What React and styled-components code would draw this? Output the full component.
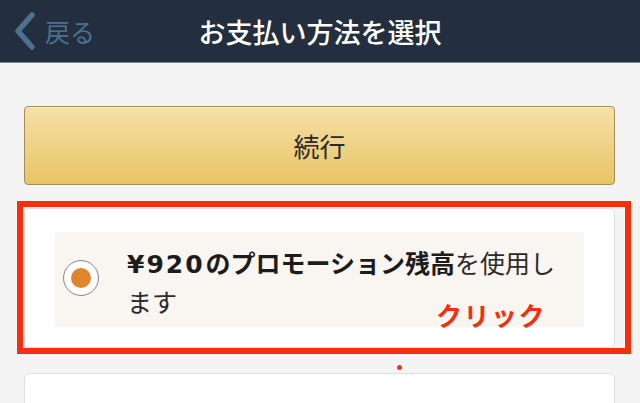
import styled, { createGlobalStyle } from "styled-components";

const GlobalStyle = createGlobalStyle`
  html, body {
    margin: 0;
    padding: 0;
    background: #f4f4f5;
    font-family: "Noto Sans CJK JP", "Noto Sans", sans-serif;
  }
`;

const StyledPage = styled.div`
  position: relative;
  width: 640px;
  height: 403px;
  overflow: hidden;
  background: #f4f4f5;
`;

const StyledHeader = styled.header`
  height: 62px;
  display: grid;
  grid-template-columns: 1fr auto 1fr;
  align-items: center;
  background: #232f3e;
  border-bottom: 1px solid #7d848c;
`;

const StyledBack = styled.div`
  display: flex;
  align-items: center;
  gap: 9px;
  padding-left: 12px;
  color: #4c7190;
  font-size: 25px;
`;

const StyledTitle = styled.h1`
  margin: 0;
  color: #ffffff;
  font-size: 27px;
  font-weight: 500;
`;

const StyledContent = styled.main`
  display: flex;
  flex-direction: column;
  padding: 43px 25px 0 24px;
`;

const StyledButton = styled.button`
  height: 79px;
  border: 1px solid #a68d58;
  border-radius: 4px;
  background: linear-gradient(#f6e0a7, #e8c465);
  box-shadow: inset 0 1px 0 rgba(255, 255, 255, 0.4);
  color: #2a2a2a;
  font-family: inherit;
  font-size: 26px;
  cursor: pointer;
`;

const StyledCard = styled.div`
  margin-top: ${(p) => p.$gap}px;
  height: ${(p) => p.$height}px;
  box-sizing: border-box;
  padding: 23px 30px 21px 30px;
  background: #ffffff;
  border: 1px solid #dedfe1;
  border-radius: 6px;
`;

const StyledOption = styled.label`
  height: 95px;
  display: flex;
  align-items: center;
  gap: 28px;
  padding: 0 10px 0 8px;
  background: #f9f5f0;
  cursor: pointer;
`;

const StyledRadio = styled.span`
  flex: none;
  width: 34px;
  height: 34px;
  margin-top: -3px;
  display: grid;
  place-items: center;
  border: 1.5px solid #8a8a8a;
  border-radius: 50%;
  background: #fff;
  box-shadow: inset 0 0 2px rgba(0, 0, 0, 0.15);

  &::after {
    content: "";
    width: 20px;
    height: 20px;
    border-radius: 50%;
    background: #df862d;
  }
`;

const StyledLabel = styled.span`
  max-width: 440px;
  margin-top: 4px;
  color: #2b2b2b;
  font-size: 25px;
  line-height: 37px;

  b {
    font-weight: 700;
    color: #1c1c1c;
  }
`;

const StyledAmount = styled.span`
  font-family: "DejaVu Sans", "Noto Sans", sans-serif;
  font-size: 25px;
  letter-spacing: 2px;
  margin-right: 1px;
`;

const StyledHighlight = styled.div`
  position: absolute;
  left: 17px;
  top: 201px;
  width: 614px;
  height: 153px;
  box-sizing: border-box;
  border: 6px solid #f52e0c;
  pointer-events: none;
`;

const StyledNote = styled.span`
  position: absolute;
  left: 436px;
  top: 296px;
  color: #f52e0c;
  font-size: 26px;
  font-weight: 700;
  letter-spacing: 1.5px;
`;

const StyledDot = styled.span`
  position: absolute;
  left: 397px;
  top: 365px;
  width: 5px;
  height: 5px;
  border-radius: 50%;
  background: #e8371f;
`;

const App = () => {
  return (
    <StyledPage>
      <GlobalStyle />
      <StyledHeader>
        <StyledBack>
          <svg width="24" height="38" viewBox="0 0 24 38">
            <path
              d="M20 3 L6 19 L20 35"
              fill="none"
              stroke="#4c7190"
              strokeWidth="5.5"
              strokeLinecap="round"
              strokeLinejoin="round"
            />
          </svg>
          戻る
        </StyledBack>
        <StyledTitle>お支払い方法を選択</StyledTitle>
        <div />
      </StyledHeader>

      <StyledContent>
        <StyledButton>続行</StyledButton>

        <StyledCard $gap={23} $height={140}>
          <StyledOption>
            <StyledRadio />
            <StyledLabel>
              <b>
                <StyledAmount>¥920</StyledAmount>のプロモーション残高
              </b>
              を使用します
            </StyledLabel>
          </StyledOption>
        </StyledCard>

        <StyledCard $gap={25} $height={120} />
      </StyledContent>

      <StyledHighlight />
      <StyledNote>クリック</StyledNote>
      <StyledDot />
    </StyledPage>
  );
};

export default App;
